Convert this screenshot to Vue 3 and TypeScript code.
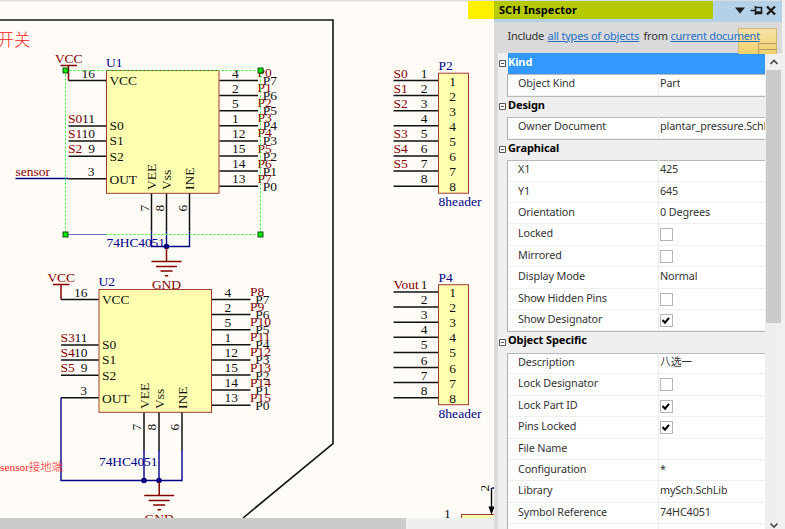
<script setup lang="ts">
interface Chip {
  ref: string
  dx: number
  dy: number
  selects: string[]
  nets: string[]
}
interface Header {
  ref: string
  y: number
  nets: string[]
}
interface Row {
  label: string
  value?: string
  check?: boolean
}
interface Section {
  title: string
  active?: boolean
  rows: Row[]
}

const chips: Chip[] = [
  { ref: 'U1', dx: 0, dy: 0, selects: ['S0', 'S1', 'S2'], nets: ['P0', 'P1', 'P2', 'P3', 'P4', 'P5', 'P6', 'P7'] },
  { ref: 'U2', dx: -7.5, dy: 219, selects: ['S3', 'S4', 'S5'], nets: ['P8', 'P9', 'P10', 'P11', 'P12', 'P13', 'P14', 'P15'] },
]
const pinNumbers = ['4', '2', '5', '1', '12', '15', '14', '13']
const selectPins = ['11', '10', '9']
const headers: Header[] = [
  { ref: 'P2', y: 0, nets: ['S0', 'S1', 'S2', '', 'S3', 'S4', 'S5', ''] },
  { ref: 'P4', y: 211.5, nets: ['Vout', '', '', '', '', '', '', ''] },
]
const bottomPins = [
  { x: 151.5, name: 'VEE', num: '7', base: 156 },
  { x: 166.5, name: 'Vss', num: '8', base: 171 },
  { x: 189.5, name: 'INE', num: '6', base: 194 },
]
const grounds = [
  { x: 166.5, y: 261.5, top: 246 },
  { x: 159.2, y: 495.5, top: 480 },
]
const step = 15.1

const sections: Section[] = [
  { title: 'Kind', active: true, rows: [{ label: 'Object Kind', value: 'Part' }] },
  { title: 'Design', rows: [{ label: 'Owner Document', value: 'plantar_pressure.SchDoc' }] },
  {
    title: 'Graphical',
    rows: [
      { label: 'X1', value: '425' },
      { label: 'Y1', value: '645' },
      { label: 'Orientation', value: '0 Degrees' },
      { label: 'Locked', check: false },
      { label: 'Mirrored', check: false },
      { label: 'Display Mode', value: 'Normal' },
      { label: 'Show Hidden Pins', check: false },
      { label: 'Show Designator', check: true },
    ],
  },
  {
    title: 'Object Specific',
    rows: [
      { label: 'Description', value: '八选一' },
      { label: 'Lock Designator', check: false },
      { label: 'Lock Part ID', check: true },
      { label: 'Pins Locked', check: true },
      { label: 'File Name', value: '' },
      { label: 'Configuration', value: '*' },
      { label: 'Library', value: 'mySch.SchLib' },
      { label: 'Symbol Reference', value: '74HC4051' },
      { label: '', value: '' },
    ],
  },
]
</script>

<template>
  <div class="app">
    <main class="editor">
      <svg class="sheet" width="494" height="518" viewBox="0 0 494 518">
        <rect width="494" height="518" fill="#fffcf7" />
        <rect width="494" height="1.5" fill="#dedede" />
        <path d="M0 20H333V443.500L243 518" fill="none" stroke="#151515" stroke-width="1.6" />
        <text class="cjk" x="-2.500" y="46" font-size="16.500">开关</text>

        <g v-for="chip in chips" :key="chip.ref" :transform="`translate(${chip.dx} ${chip.dy})`">
          <rect class="part" x="106.500" y="70.500" width="112.500" height="122.800" />
          <text class="blue" x="106" y="67">{{ chip.ref }}</text>
          <text class="red" x="55" y="62.700" textLength="27.500">VCC</text>
          <path class="maroon" d="M60.500 65.500H77M68.500 65V80.500" />
          <path class="pin" d="M68.500 80.500H106" />
          <text x="95" y="77.500" text-anchor="end">16</text>
          <text x="109.500" y="85" textLength="27.500">VCC</text>
          <g v-for="(net, i) in chip.selects" :key="net">
            <path class="pin" :d="`M68.500 ${126 + i * step}H106`" />
            <text class="red" x="68" :y="123 + i * step">{{ net }}</text>
            <text x="95" :y="123 + i * step" text-anchor="end">{{ selectPins[i] }}</text>
            <text x="109.500" :y="130.300 + i * step">S{{ i }}</text>
          </g>
          <path class="pin" d="M68.500 178.700H106" />
          <text x="94.500" y="176" text-anchor="end">3</text>
          <text x="109.500" y="183.500" textLength="27.500">OUT</text>
          <g v-for="(net, i) in chip.nets" :key="net">
            <path class="pin" :d="`M219.500 ${80.5 + i * step}H258`" />
            <text x="232" :y="77.500 + i * step">{{ pinNumbers[i] }}</text>
            <text class="red" x="257.500" :y="77 + i * step">{{ net }}</text>
            <text x="277" :y="85 + i * step" text-anchor="end">P{{ 7 - i }}</text>
          </g>
          <g v-for="pin in bottomPins" :key="pin.name">
            <path class="pin" :d="`M${pin.x} 193.500V231.500`" />
            <text :transform="`translate(${pin.base} 190) rotate(-90)`">{{ pin.name }}</text>
            <text :transform="`translate(${pin.x - 3} 211.500) rotate(-90)`">{{ pin.num }}</text>
          </g>
        </g>

        <text class="blue" x="106.500" y="247" textLength="58.500">74HC4051</text>
        <text class="blue" x="99" y="466" textLength="58.500">74HC4051</text>
        <path class="wire" d="M151.500 231.500V246.500H189.500V231.500M166.500 231.500V246.500M15.500 178.500H68.500" />
        <path class="wire" d="M61 397.700V480.500H182V450M144 450V480.500M159 450V480.500" />
        <g fill="#000080">
          <circle cx="166.500" cy="246.500" r="2.800" />
          <circle cx="144" cy="480.500" r="2.800" />
          <circle cx="159" cy="480.500" r="2.800" />
        </g>
        <g v-for="gnd in grounds" :key="gnd.y">
          <path
            class="maroon"
            :d="`M${gnd.x} ${gnd.top + 2}V${gnd.y}M${gnd.x - 15} ${gnd.y}h30M${gnd.x - 10.5} ${gnd.y + 5}h21M${gnd.x - 6} ${gnd.y + 9.500}h12M${gnd.x - 1.7} ${gnd.y + 14.300}h3.400`"
          />
          <text class="red" :x="gnd.x" :y="gnd.y + 27.500" text-anchor="middle">GND</text>
        </g>
        <text class="red" x="15.500" y="176">sensor</text>
        <text class="cjk" x="0" y="471" font-size="11.300" textLength="63">sensor接地端</text>

        <rect class="selection" x="65.500" y="70.500" width="195" height="164" />
        <path d="M68 234.500H106" stroke="#6672cf" stroke-width="1" />
        <g class="handle">
          <rect x="63" y="68" width="5" height="5" />
          <rect x="258" y="68" width="5" height="5" />
          <rect x="63" y="232" width="5" height="5" />
          <rect x="258" y="232" width="5" height="5" />
        </g>

        <g v-for="header in headers" :key="header.ref" :transform="`translate(0 ${header.y})`">
          <rect class="part" x="438.500" y="73.200" width="30" height="120" />
          <text class="blue" x="438.500" y="70">{{ header.ref }}</text>
          <text class="blue" x="438.500" y="206" textLength="43">8header</text>
          <g v-for="(net, i) in header.nets" :key="i">
            <path class="pin" :d="`M393.500 ${80.5 + i * step}H438`" />
            <text class="red" x="393.500" :y="77.500 + i * step">{{ net }}</text>
            <text x="427.500" :y="77.500 + i * step" text-anchor="end">{{ i + 1 }}</text>
            <text x="452.500" :y="85.500 + i * step" text-anchor="middle">{{ i + 1 }}</text>
          </g>
        </g>

        <rect class="part" x="461.500" y="514.500" width="40" height="20" />
        <text x="444" y="517.500">1</text>
        <text transform="translate(489 491.500) rotate(-90)">2</text>
        <path d="M494 488H492" stroke="#000080" stroke-width="1.400" />
        <path d="M491.500 488V508" stroke="#000" stroke-width="1.400" />
        <path d="M488.500 506.500H494.500L491.500 515Z" fill="#000" />
      </svg>
      <div class="hscroll"><div class="hthumb"></div></div>
    </main>

    <aside class="panel">
      <header class="titlebar">
        <span class="title">SCH Inspector</span>
        <svg class="controls" width="46" height="22" viewBox="0 0 46 22">
          <path d="M-1 6.500H9L4 12.500Z" fill="#1c1c1c" />
          <path d="M14.500 9.500H19M19.500 5V14M20 6.500H25.500V12.500H20M20 11H25.500" fill="none" stroke="#1c1c1c" stroke-width="1.600" />
          <path d="M31 5.500L39 13.500M39 5.500L31 13.500" stroke="#1c1c1c" stroke-width="2.300" />
        </svg>
      </header>
      <div class="filter">
        <svg class="sheet-icon" width="40" height="26" viewBox="0 0 40 26">
          <defs>
            <linearGradient id="gold" x1="0" y1="0" x2="0" y2="1">
              <stop offset="0" stop-color="#f5e2a8" />
              <stop offset="1" stop-color="#f3cd61" />
            </linearGradient>
          </defs>
          <path d="M.5 .5H38.500V30H.5Z" fill="url(#gold)" stroke="#d1b775" />
          <path d="M38.500 15.500H20.500V30M20.500 21.500H38.500" fill="none" stroke="#b59d62" />
        </svg>
        <p class="scope"><span class="inc">Include</span><a class="types">all types of objects</a><span class="from">from</span><a>current document</a></p>
      </div>
      <div class="body">
        <div class="grid">
          <section v-for="section in sections" :key="section.title" :class="{ active: section.active }">
            <h2>
              <svg class="toggle" width="7" height="7" viewBox="0 0 7 7">
                <path d="M.5 .5H6.500V6.500H.5ZM2 3.500H5" fill="none" stroke="#555" />
              </svg>
              <span class="heading">{{ section.title }}</span>
            </h2>
            <div class="rows">
              <div v-for="row in section.rows" :key="row.label" class="row">
                <span class="label">{{ row.label }}</span>
                <span class="value">
                  <svg v-if="row.check !== undefined" class="check" width="13" height="13" viewBox="0 0 13 13">
                    <rect x=".5" y=".5" width="12" height="12" fill="#fff" stroke="#b5b5b5" />
                    <path v-if="row.check" d="M2.500 6L5 8.700L9 3.800" fill="none" stroke="#000" stroke-width="2" />
                  </svg>
                  <template v-else>{{ row.value }}</template>
                </span>
              </div>
            </div>
          </section>
        </div>
        <div class="vscroll">
          <svg width="17" height="17" viewBox="0 0 17 17"><path d="M5.500 11L9 7.500L12.500 11" /></svg>
          <div class="vthumb"></div>
          <svg width="17" height="8" viewBox="0 0 17 8"><path d="M5.500 2.500L9 6L12.500 2.500" /></svg>
        </div>
      </div>
    </aside>
    <div class="marker"></div>
  </div>
</template>

<style>
body {
  overflow: hidden;
}
</style>

<style scoped>
.app {
  position: relative;
  display: flex;
  width: 785px;
  height: 529px;
  overflow: hidden;
  background: #f0f0f0;
  font-family: 'Noto Sans', 'Noto Sans CJK SC', sans-serif;
}
.editor {
  width: 494px;
  flex: none;
}
.sheet {
  display: block;
  font-family: 'Liberation Serif', 'Noto Sans CJK SC', serif;
  font-size: 13.5px;
}
.sheet text {
  fill: #111;
}
.sheet .blue {
  fill: #000088;
}
.sheet .red {
  fill: #850000;
}
.sheet .cjk {
  fill: #ff2020;
  font-family: 'Liberation Serif', 'Noto Sans CJK SC', serif;
  font-weight: 300;
}
.part {
  fill: #ffffb0;
  stroke: #a13a35;
  stroke-width: 1;
}
.pin {
  stroke: #111;
  stroke-width: 1.5;
}
.wire {
  fill: none;
  stroke: #000088;
  stroke-width: 1.4;
}
.maroon {
  fill: none;
  stroke: #850000;
  stroke-width: 1.5;
}
.selection {
  fill: none;
  stroke: #27f027;
  stroke-dasharray: 2 2;
}
.handle {
  fill: #00e800;
  stroke: #145014;
}
.hscroll {
  height: 11px;
  background: #efefef;
}
.hthumb {
  width: 406px;
  height: 100%;
  background: #cbcbcb;
}
.panel {
  display: flex;
  flex-direction: column;
  width: 288px;
  flex: none;
  background: #dadada;
}
.titlebar {
  display: flex;
  align-items: center;
  justify-content: space-between;
  height: 22px;
  flex: none;
  box-sizing: border-box;
  border-top: 1px solid #d6dce0;
  background: linear-gradient(90deg, #b5c900 219px, #b5d1e8 219px) no-repeat 0 0 / 100% 18px, #b5d1e8;
}
.controls {
  overflow: visible;
}
.title {
  padding-left: 5px;
  font-size: 11px;
  line-height: 18px;
  margin-bottom: 3px;
  font-weight: 700;
  color: #000;
  letter-spacing: 0.06px;
}
.filter {
  position: relative;
  height: 31px;
  flex: none;
}
.sheet-icon {
  position: absolute;
  right: 4px;
  top: 6px;
}
.scope {
  position: relative;
  display: flex;
  margin: 0;
  padding: 6px 0 0 13.500px;
  font-size: 11px;
  line-height: 15px;
  color: #333;
  white-space: nowrap;
}
.scope .inc {
  width: 40px;
  letter-spacing: -0.3px;
}
.scope .types {
  width: 91px;
  margin-right: 5px;
  letter-spacing: -0.2px;
}
.scope .from {
  width: 27px;
  letter-spacing: -0.2px;
}
.scope a {
  color: #2470c8;
  text-decoration: underline;
  letter-spacing: -0.26px;
}
.body {
  display: flex;
  height: 476px;
  padding-left: 4px;
}
.grid {
  width: 267px;
  overflow: hidden;
  background: #efefef;
}
h2 {
  display: flex;
  align-items: center;
  height: 21.43px;
  margin: 0;
  font-size: 11px;
  line-height: 18px;
  font-weight: 700;
  color: #000;
}
.toggle {
  margin: 0 2px 0 1px;
  background: #fff;
}
.heading {
  flex: 1;
  height: 100%;
  box-sizing: border-box;
  letter-spacing: -0.12px;
}
.active .heading {
  background: #3399ff;
  color: #fff;
}
.rows {
  margin-left: 9px;
  border-left: 1px solid #b0b0b0;
  box-shadow: inset 0 1px #b8b8b8, 0 1px #b8b8b8;
  background: #fff;
}
.row {
  display: flex;
  height: 21.43px;
  box-sizing: border-box;
  border-bottom: 1px solid #efefef;
  font-size: 10.8px;
  line-height: 18.5px;
  letter-spacing: -0.14px;
  color: #333;
}
.label {
  width: 140px;
  padding-left: 10px;
  flex: none;
  border-right: 1px solid #ececec;
}
.value {
  padding-left: 1px;
  overflow: hidden;
  white-space: nowrap;
}
.check {
  display: block;
  margin-top: 4px;
}
.vscroll {
  display: flex;
  flex-direction: column;
  width: 17px;
  background: #efefef;
}
.vscroll path {
  fill: none;
  stroke: #444;
  stroke-width: 1.6;
}
.vthumb {
  width: 15px;
  height: 253px;
  margin: 0 1px auto;
  background: #cbcbcb;
}
.marker {
  position: absolute;
  left: 468px;
  top: 1px;
  width: 26px;
  height: 18px;
  background: #fff000;
}
</style>
